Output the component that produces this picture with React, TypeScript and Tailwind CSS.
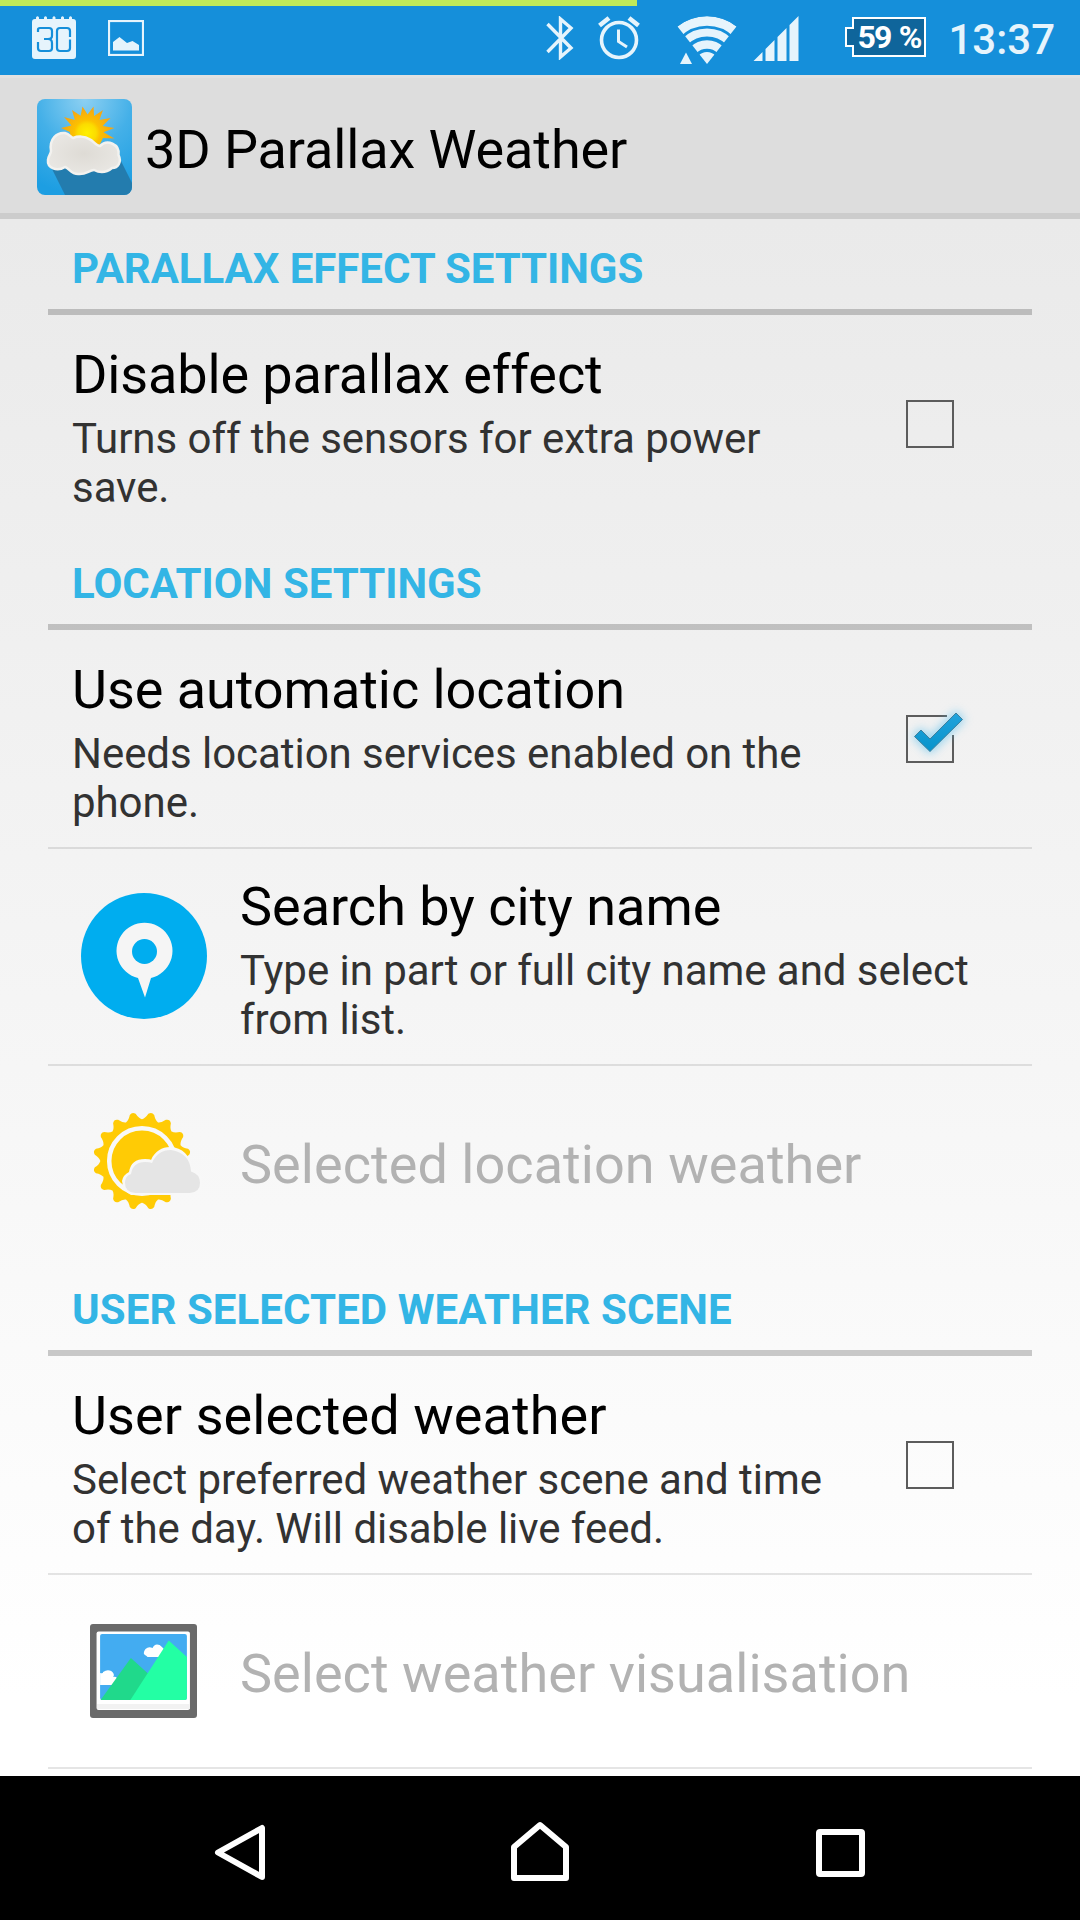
import React from 'react';

interface PreferenceProps {
  title: string;
  summary?: string;
  icon?: React.ReactNode;
  checked?: boolean;
  disabled?: boolean;
  titleClass?: string;
}

function CalendarIcon() {
  return (
    <svg className="w-[44px] h-[43px]" viewBox="0 0 44 43" fill="none">
      <path d="M3 3H4V1.500Q5.500-1 7 1.500V3H12V1.500Q13.500-1 15 1.500V3H20.500V1.500Q22-1 23.500 1.500V3H29V1.500Q30.500-1 32 1.500V3H37V1.500Q38.500-1 40 1.500V3H41Q44 3 44 6V40Q44 43 41 43H3Q0 43 0 40V6Q0 3 3 3Z" fill="#e6f4fc" />
      <path d="M6 16V13.500Q6 12 8 12H17Q20 12 20 15V20Q20 23 16 23H12M16 23Q20 23 20 27V32Q20 35 17 35H9Q6 35 6 32V26M38 21V15Q38 12 35 12H28Q25 12 25 15V32Q25 35 28 35H35Q38 35 38 32V23.500" stroke="#158fda" strokeWidth="2.200" />
    </svg>
  );
}

function GalleryIcon() {
  return (
    <svg className="w-[36px] h-[36px]" viewBox="0 0 36 36">
      <rect x="1" y="1" width="34" height="34" fill="none" stroke="#e6f4fc" strokeWidth="2.200" />
      <path d="M5 30.500V22L11.500 17L19 23L24.500 21L31 25V30.500Z" fill="#e6f4fc" />
    </svg>
  );
}

function BluetoothIcon() {
  return (
    <svg className="w-[28px] h-[44px]" viewBox="0 0 28 44" fill="none" stroke="#e6f4fc" strokeWidth="3.400">
      <path d="M1.500 8L25 32L14.500 41V3L25 12L1.500 36" />
    </svg>
  );
}

function AlarmIcon() {
  return (
    <svg className="w-[42px] h-[44px]" viewBox="0 0 42 44" fill="none" stroke="#e6f4fc">
      <circle cx="21" cy="24" r="17.500" strokeWidth="3.600" />
      <path d="M1.500 9.500L11 2M40.500 9.500L31 2" strokeWidth="4.600" />
      <path d="M20.500 13.500V25.500L29 31" strokeWidth="3" />
    </svg>
  );
}

function WifiIcon() {
  return (
    <svg className="w-[60px] h-[49px]" viewBox="0 0 60 49">
      <defs>
        <clipPath id="fan">
          <path d="M30 48L0.500 10.500Q14 0 30 0T59.500 10.500Z" />
        </clipPath>
      </defs>
      <g clipPath="url(#fan)" fill="none" stroke="#e6f4fc">
        <circle cx="30" cy="48" r="43" strokeWidth="9.500" />
        <circle cx="30" cy="48" r="31.500" strokeWidth="8" />
        <circle cx="30" cy="48" r="19.500" strokeWidth="8.500" />
        <circle cx="30" cy="48" r="6" strokeWidth="12" />
      </g>
      <path d="M3 48L9 36.500L15 48Z" fill="#e6f4fc" />
    </svg>
  );
}

function SignalIcon() {
  return (
    <svg className="w-[46px] h-[46px]" viewBox="0 0 46 46" fill="#e6f4fc">
      <path d="M0.500 45L9.500 36V45ZM12.500 33L21.500 24V45H12.500ZM24.500 21L33.500 12V45H24.500ZM36.500 9L45.500 0V45H36.500Z" />
    </svg>
  );
}

function AppLogo() {
  return (
    <svg className="w-[95px] h-[96px]" viewBox="0 0 95 96">
      <defs>
        <radialGradient id="sky" cx="50%" cy="0%" r="100%">
          <stop offset="0" stopColor="#8dd0f2" />
          <stop offset=".5" stopColor="#44b0e8" />
          <stop offset="1" stopColor="#1d9ee2" />
        </radialGradient>
        <radialGradient id="sun" gradientUnits="userSpaceOnUse" cx="50" cy="34" r="26">
          <stop offset="0" stopColor="#fff000" />
          <stop offset=".35" stopColor="#fbdc00" />
          <stop offset=".5" stopColor="#fcc000" />
          <stop offset="1" stopColor="#f3a416" />
        </radialGradient>
        <radialGradient id="cloud">
          <stop offset="0" stopColor="#dedbd5" />
          <stop offset="1" stopColor="#e8e6e2" />
        </radialGradient>
        <clipPath id="tile">
          <rect width="95" height="96" rx="8" />
        </clipPath>
      </defs>
      <g clipPath="url(#tile)">
        <rect width="95" height="96" fill="url(#sky)" />
        <path d="M14 68L28 96H95V84L83 60Z" fill="#237cae" />
        <path d="M24 29L34.400 26.600L27 18L37.800 20.900L35 11L43.600 16.800L45.500 7.500L50.600 15.500L56.500 7.500L57.100 17.100L66 11L62.400 21.100L73.500 19L65.700 26.900L77.500 29L66.500 33.200L77.500 39.500L66 39L62 47H34L33 33Z" fill="url(#sun)" />
        <path d="M14 52C12 40 20 33 28 34C32 35 34 38 36 39C41 37 48 37 52 40C57 42 59 47 63 47C70 40 83 45 81.500 56C85 63 81 69 75 69C69 74 63 74 57 71C52 71 49 76 41 75C34 75 32 69 28 68C20 73 10 69 11 61C11 57 14 55 14 52Z" fill="url(#cloud)" stroke="#f3f2ef" strokeWidth="2.500" />
      </g>
    </svg>
  );
}

function LocationIcon() {
  return (
    <svg className="w-[128px] h-[128px]" viewBox="0 0 128 128">
      <circle cx="64" cy="64" r="63" fill="#00adef" />
      <path d="M58 86A28 28 0 1 1 71 86L65 105.500Z" fill="#f5f5f5" />
      <circle cx="64.500" cy="59.500" r="12.500" fill="#00adef" />
    </svg>
  );
}

// teeth hidden behind the cloud are left out
const SUN_TEETH = Array.from({ length: 16 }, (_, i) => i).filter((i) => i !== 4 && i !== 5);

function WeatherIcon() {
  return (
    <svg className="w-[108px] h-[98px] ml-1.5 overflow-visible" viewBox="0 0 108 98">
      <g fill="#ffcb05">
        <circle cx="49" cy="49" r="41" />
        {SUN_TEETH.map((i) => (
          <path key={i} d="M39 12L41 8Q44 6.500 46 1.500Q49 -1.500 52 1.500Q54 6.500 57 8L59 12Z" transform={`rotate(${i * 22.5 + 11.25} 49 49)`} />
        ))}
      </g>
      <circle cx="49" cy="49" r="32.800" fill="none" stroke="#f8f8f8" strokeWidth="4.500" />
      <path d="M38 83Q30 79 29 69Q30 63 36 60Q38 47 52 47Q57 47 58 48C62 39 69 35 77 35Q96 36 99 57Q109 59 109 69Q109 83 95 83H42Z" fill="#f8f8f8" />
      <path d="M42 81Q32 80 32 71Q32 64 38 62Q40 50 52 50Q57 50 59 51C63 42 69 38 78 38Q97 41 98 59.500Q107 62 107 71Q107 80 97 81Z" fill="#e5e5e5" />
    </svg>
  );
}

function PictureIcon() {
  return (
    <svg className="w-[107px] h-[94px] mr-px mt-0.5" viewBox="1 1 106 94" preserveAspectRatio="none">
      <rect x="1" y="1" width="106" height="94" rx="3" fill="#6a6a6a" />
      <rect x="7.500" y="8.500" width="92.500" height="78.500" rx="2" fill="#fff" />
      <path d="M8 81H100V86H8Z" fill="#f2f2f2" />
      <path d="M11 13Q11 11 13 11H95Q97 11 97 13V75Q97 77 95 77H13Q11 77 11 75Z" fill="#43acf1" />
      <path d="M11 50Q14 51 14 49Q18 46 22 48Q26 51 24 54Q28 53 28 57L23 62H11ZM57 33Q52 31 56 26Q59 23 63 25Q65 20 70 22Q75 26 76 29L72 34H58Z" fill="#fff" />
      <path d="M11.500 77L41.500 35L59 51L42 77Z" fill="#20d98b" />
      <path d="M41 77L79 17.500L97 34V75Q97 77 95 77Z" fill="#23ffa4" />
    </svg>
  );
}

function Checkbox({ checked }: { checked: boolean }) {
  if (!checked) {
    return <div className="w-12 h-12 mt-px border-2 border-[#5c5c5c] mr-[78px]" />;
  }
  return (
    <svg className="w-12 h-12 mt-px mr-[78px] overflow-visible" viewBox="0 0 48 48">
      <defs>
        <linearGradient id="tick" x1="0" y1="0" x2="0" y2="1">
          <stop offset="0" stopColor="#22a3dc" />
          <stop offset="1" stopColor="#0693cb" />
        </linearGradient>
      </defs>
      <path d="M41 1H1V47H47V20" fill="none" stroke="#5c5c5c" strokeWidth="2" />
      <path d="M8.500 21.500L15 15L24 24L50 -2L56.500 4.500L24 36.500Z" fill="#59c0ee" stroke="#59c0ee" strokeWidth="4" opacity=".6" className="blur-[5px]" />
      <path d="M8.500 21.500L15 15L24 24L50 -2L56.500 4.500L24 36.500Z" fill="url(#tick)" stroke="#3f7f9c" strokeWidth="1" />
    </svg>
  );
}

function SectionHeader({ title, titleClass = '' }: { title: string; titleClass?: string }) {
  return (
    <h2 className={`h-24 pt-[25px] pl-6 border-b-[6px] border-black/20 text-[42px] leading-[49px] font-bold text-[#33b5e5] whitespace-nowrap ${titleClass}`}>
      {title}
    </h2>
  );
}

function Preference({ title, summary, icon, checked, disabled, titleClass = '' }: PreferenceProps) {
  return (
    <div className="flex flex-1 items-center pl-6">
      {icon && <div className="w-[144px] mr-6 mb-0.5 flex justify-center">{icon}</div>}
      <div className={icon ? 'flex-1 pt-[5px]' : 'flex-1 pt-[7px]'}>
        <div className={`text-[54px] leading-[64px] whitespace-nowrap ${disabled ? 'text-[#b2b2b2]' : 'text-black'} ${titleClass}`}>
          {title}
        </div>
        {summary && (
          <div className="mt-[7px] text-[42px] leading-[49px] tracking-[-0.05px] text-[#323232] whitespace-pre-line">{summary}</div>
        )}
      </div>
      {checked !== undefined && <Checkbox checked={checked} />}
    </div>
  );
}

function StatusBar() {
  return (
    <div className="relative h-[75px] shrink-0 bg-[#158fda] text-[#e6f4fc] flex items-start">
      <div className="absolute top-0 left-0 w-[637px] h-1.5 bg-[#bfea5a]" />
      <div className="flex ml-8 mt-4">
        <CalendarIcon />
        <div className="ml-8 mt-1">
          <GalleryIcon />
        </div>
      </div>
      <div className="flex ml-auto mt-4 mr-[25px]">
        <BluetoothIcon />
        <div className="ml-6">
          <AlarmIcon />
        </div>
        <div className="ml-[37px]">
          <WifiIcon />
        </div>
        <div className="ml-4">
          <SignalIcon />
        </div>
        <div className="relative ml-[46px] mt-[1px] w-[81px] h-10">
          <svg className="absolute inset-0" width="81" height="40" viewBox="0 0 81 40">
            <path d="M8 1H80V39H8V29H1V11H8Z" fill="#0f659b" stroke="#fff" strokeWidth="2" />
          </svg>
          <span className="absolute left-[12px] top-0 text-[32px] leading-[40px] font-bold tracking-[-1.8px] [word-spacing:2px] text-white whitespace-nowrap">59 %</span>
        </div>
        <span className="ml-[22px] mt-px text-[42px] leading-[46px] font-medium whitespace-nowrap">13:37</span>
      </div>
    </div>
  );
}

function NavBar() {
  return (
    <div className="h-[144px] shrink-0 bg-black flex items-center justify-between pl-[214px] pr-[215px] pt-2.5">
      <svg className="w-[52px] h-[58px]" viewBox="0 0 52 58" fill="none" stroke="#fff" strokeWidth="6" strokeLinejoin="round">
        <path d="M48 4V53L4 28.500Z" />
      </svg>
      <svg className="w-[58px] h-[60px] mr-0.5 mb-[5px]" viewBox="0 0 58 60" fill="none" stroke="#fff" strokeWidth="6" strokeLinejoin="round">
        <path d="M3 26L29 4L55 26V57H3Z" />
      </svg>
      <div className="w-[49px] h-12 border-[6px] border-white rounded-[4px]" />
    </div>
  );
}

export default function App() {
  return (
    <div className="w-[1080px] h-[1920px] flex flex-col overflow-hidden bg-white font-['Roboto',sans-serif]">
      <StatusBar />
      <header className="h-36 shrink-0 flex items-center pl-[37px] pt-[3px] border-t-[3px] border-t-[#e1e1e1] border-b-[6px] border-b-[#cccccc] bg-[#dddddd]">
        <AppLogo />
        <h1 className="ml-[13px] mt-1.5 text-[54px] leading-[64px] tracking-[-0.1px] text-black whitespace-nowrap">3D Parallax Weather</h1>
      </header>
      <main className="h-[1557px] shrink-0 px-12 bg-gradient-to-b from-[#eaeaea] to-white to-95%">
        <SectionHeader title="PARALLAX EFFECT SETTINGS" titleClass="tracking-[-0.05px]" />
        <div className="h-[219px] flex border-b-2 border-transparent">
          <Preference
            title="Disable parallax effect"
            titleClass="tracking-[-0.13px]"
            summary={'Turns off the sensors for extra power\nsave.'}
            checked={false}
          />
        </div>

        <SectionHeader title="LOCATION SETTINGS" />
        <div className="h-[219px] flex border-b-2 border-black/10">
          <Preference
            title="Use automatic location"
            titleClass="tracking-[-0.05px]"
            summary={'Needs location services enabled on the\nphone.'}
            checked
          />
        </div>
        <div className="h-[217px] flex border-b-2 border-black/10">
          <Preference title="Search by city name" summary={'Type in part or full city name and select\nfrom list.'} icon={<LocationIcon />} />
        </div>
        <div className="h-[194px] flex border-b-2 border-transparent">
          <Preference title="Selected location weather" titleClass="tracking-[0.05px]" icon={<WeatherIcon />} disabled />
        </div>

        <SectionHeader title="USER SELECTED WEATHER SCENE" titleClass="tracking-[0.08px]" />
        <div className="h-[219px] flex border-b-2 border-black/10">
          <Preference
            title="User selected weather"
            titleClass="tracking-[0.09px]"
            summary={'Select preferred weather scene and time\nof the day. Will disable live feed.'}
            checked={false}
          />
        </div>
        <div className="h-[194px] flex border-b-2 border-black/10">
          <Preference title="Select weather visualisation" titleClass="tracking-[0.04px]" icon={<PictureIcon />} disabled />
        </div>
      </main>
      <NavBar />
    </div>
  );
}
